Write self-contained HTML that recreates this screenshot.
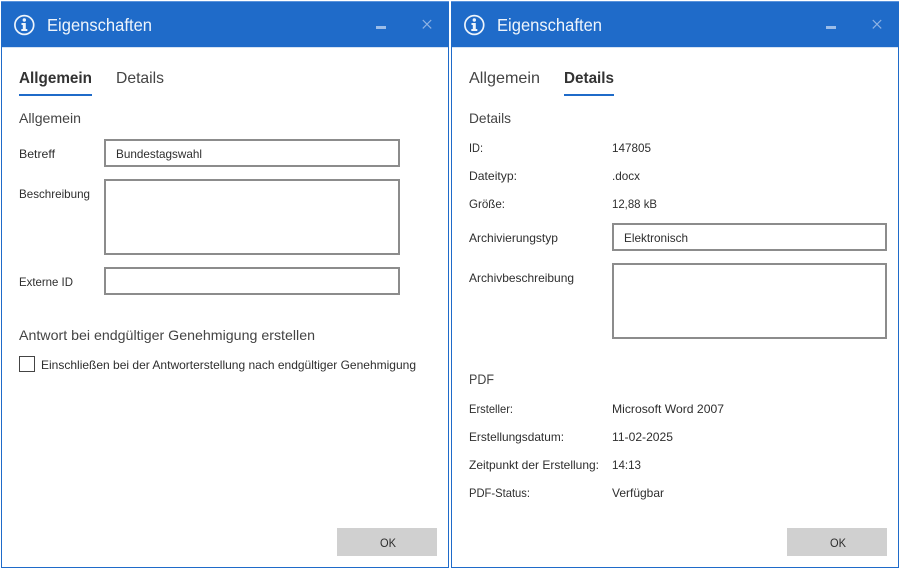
<!DOCTYPE html>
<html lang="de"><head><meta charset="utf-8"><title>Eigenschaften</title>
<style>
html,body{margin:0;padding:0;background:#fff;width:900px;height:568px;overflow:hidden}
svg{display:block}
text{font-family:"Liberation Sans",sans-serif;font-size:12px;fill:#2e2e2e;white-space:pre}
.t{font-size:17.5px;fill:#eef4fb}
.tab{font-size:16px;fill:#444}
.tabb{font-size:16px;font-weight:bold;fill:#333}
.h{font-size:14px;fill:#444}
.f{fill:none;stroke:#8c8c8c;stroke-width:2}
</style></head><body>
<svg width="900" height="568" viewBox="0 0 900 568" xmlns="http://www.w3.org/2000/svg">
<defs>
<g id="ico">
<circle cx="24.300" cy="25" r="9.400" fill="none" stroke="#eef4fb" stroke-width="1.700"/>
<circle cx="24.300" cy="20" r="1.700" fill="#eef4fb"/>
<path d="M21.500 23h4.300v6h1.500v2h-6v-2h1.500v-4h-1.300z" fill="#eef4fb"/>
</g>
<g id="ctl">
<rect x="376" y="26" width="10" height="3" fill="#9cbde8"/>
<path d="M422.800 20l8.400 8.400M431.200 20l-8.400 8.400" stroke="#8fb3e4" stroke-width="1.200" fill="none"/>
</g>
</defs>
<!-- window 1 -->
<rect x="1.500" y="1.500" width="447" height="566" fill="#fff" stroke="#1f6bc9" stroke-width="1"/>
<rect x="1" y="1" width="448" height="1" fill="#5a93dc"/>
<rect x="1" y="2" width="448" height="45" fill="#1f6bc9"/>
<rect x="2" y="47" width="446" height="1" fill="#d5e2f3"/>
<!-- window 2 -->
<rect x="451.500" y="1.500" width="447" height="566" fill="#fff" stroke="#1f6bc9" stroke-width="1"/>
<rect x="451" y="1" width="448" height="1" fill="#5a93dc"/>
<rect x="451" y="2" width="448" height="45" fill="#1f6bc9"/>
<rect x="452" y="47" width="446" height="1" fill="#d5e2f3"/>

<use href="#ico"/><use href="#ctl"/>
<use href="#ico" transform="translate(450 0)"/><use href="#ctl" transform="translate(450 0)"/>

<text class="t" x="47" y="31" textLength="105" lengthAdjust="spacingAndGlyphs">Eigenschaften</text>
<text class="t" x="497" y="31" textLength="105" lengthAdjust="spacingAndGlyphs">Eigenschaften</text>

<!-- left content -->
<text class="tabb" x="19" y="83" textLength="73" lengthAdjust="spacingAndGlyphs">Allgemein</text>
<text class="tab" x="116" y="83" textLength="48" lengthAdjust="spacingAndGlyphs">Details</text>
<rect x="19" y="94" width="73" height="2" fill="#1f6bc9"/>
<text class="h" x="19" y="123" textLength="62" lengthAdjust="spacingAndGlyphs">Allgemein</text>
<text x="19" y="158" textLength="36" lengthAdjust="spacingAndGlyphs">Betreff</text>
<rect class="f" x="105" y="140" width="294" height="26"/>
<text x="116" y="158" textLength="86" lengthAdjust="spacingAndGlyphs">Bundestagswahl</text>
<text x="19" y="198" textLength="71" lengthAdjust="spacingAndGlyphs">Beschreibung</text>
<rect class="f" x="105" y="180" width="294" height="74"/>
<text x="19" y="286" textLength="54" lengthAdjust="spacingAndGlyphs">Externe ID</text>
<rect class="f" x="105" y="268" width="294" height="26"/>
<text class="h" x="19" y="340" textLength="296" lengthAdjust="spacingAndGlyphs">Antwort bei endgültiger Genehmigung erstellen</text>
<rect x="19.500" y="356.500" width="15" height="15" fill="#fff" stroke="#444" stroke-width="1"/>
<text x="41" y="369" textLength="375" lengthAdjust="spacingAndGlyphs">Einschließen bei der Antworterstellung nach endgültiger Genehmigung</text>
<rect x="337" y="528" width="100" height="28" fill="#d0d0d0"/>
<text x="380" y="547" textLength="16" lengthAdjust="spacingAndGlyphs">OK</text>

<!-- right content -->
<text class="tab" x="469" y="83" textLength="71" lengthAdjust="spacingAndGlyphs">Allgemein</text>
<text class="tabb" x="564" y="83" textLength="50" lengthAdjust="spacingAndGlyphs">Details</text>
<rect x="564" y="94" width="50" height="2" fill="#1f6bc9"/>
<text class="h" x="469" y="123" textLength="42" lengthAdjust="spacingAndGlyphs">Details</text>
<text x="469" y="152" textLength="14" lengthAdjust="spacingAndGlyphs">ID:</text>
<text x="612" y="152" textLength="39" lengthAdjust="spacingAndGlyphs">147805</text>
<text x="469" y="180" textLength="48" lengthAdjust="spacingAndGlyphs">Dateityp:</text>
<text x="612" y="180" textLength="28" lengthAdjust="spacingAndGlyphs">.docx</text>
<text x="469" y="208" textLength="36" lengthAdjust="spacingAndGlyphs">Größe:</text>
<text x="612" y="208" textLength="45" lengthAdjust="spacingAndGlyphs">12,88 kB</text>
<text x="469" y="242" textLength="89" lengthAdjust="spacingAndGlyphs">Archivierungstyp</text>
<rect class="f" x="613" y="224" width="273" height="26"/>
<text x="624" y="242" textLength="64" lengthAdjust="spacingAndGlyphs">Elektronisch</text>
<text x="469" y="282" textLength="105" lengthAdjust="spacingAndGlyphs">Archivbeschreibung</text>
<rect class="f" x="613" y="264" width="273" height="74"/>
<text class="h" x="469" y="384" textLength="25" lengthAdjust="spacingAndGlyphs">PDF</text>
<text x="469" y="413" textLength="44" lengthAdjust="spacingAndGlyphs">Ersteller:</text>
<text x="612" y="413" textLength="112" lengthAdjust="spacingAndGlyphs">Microsoft Word 2007</text>
<text x="469" y="441" textLength="95" lengthAdjust="spacingAndGlyphs">Erstellungsdatum:</text>
<text x="612" y="441" textLength="61" lengthAdjust="spacingAndGlyphs">11-02-2025</text>
<text x="469" y="469" textLength="130" lengthAdjust="spacingAndGlyphs">Zeitpunkt der Erstellung:</text>
<text x="612" y="469" textLength="29" lengthAdjust="spacingAndGlyphs">14:13</text>
<text x="469" y="497" textLength="61" lengthAdjust="spacingAndGlyphs">PDF-Status:</text>
<text x="612" y="497" textLength="52" lengthAdjust="spacingAndGlyphs">Verfügbar</text>
<rect x="787" y="528" width="100" height="28" fill="#d0d0d0"/>
<text x="830" y="547" textLength="16" lengthAdjust="spacingAndGlyphs">OK</text>
</svg>
</body></html>
